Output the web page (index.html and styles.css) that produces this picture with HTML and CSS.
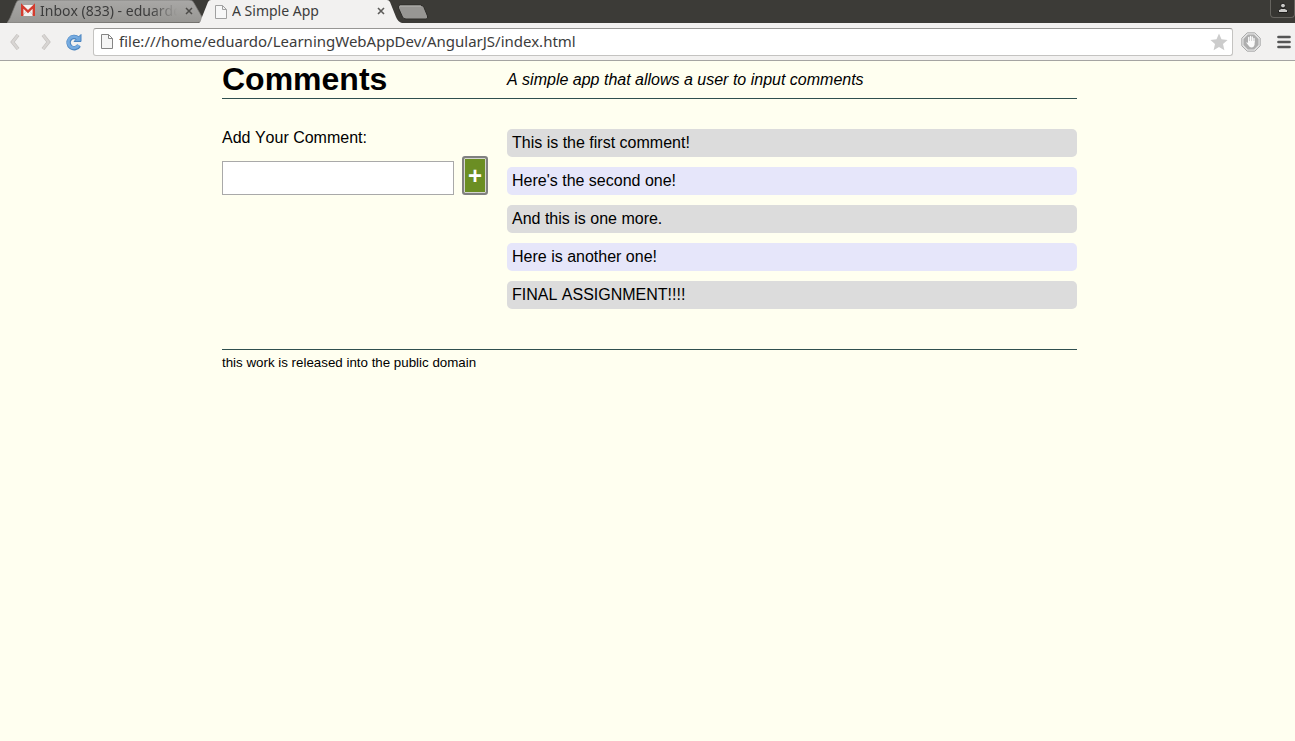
FILE: index.html
```html
<!DOCTYPE html>
<html lang="en">
<head>
<meta charset="utf-8">
<title>A Simple App</title>
<link rel="stylesheet" href="styles.css">
</head>
<body>
<div class="browser">
  <div class="tab-strip">
    <div class="tab tab-mail">
      <svg class="tab-shape" viewBox="0 0 196 23" preserveAspectRatio="none" aria-hidden="true">
        <defs><linearGradient id="idle" x1="0" y1="0" x2="0" y2="1"><stop offset="0" stop-color="#a9a8a6"/><stop offset="1" stop-color="#979693"/></linearGradient></defs>
        <path d="M0 23L3 18L9 3Q10 0 13 0H182Q186 0 187 3L195 17Q198 22 191 22.500Z" fill="url(#idle)" stroke="#777672" stroke-width=".7"/>
      </svg>
      <svg class="mail-icon" width="16" height="16" viewBox="0 0 16 16" aria-hidden="true">
        <path d="M1 2H15V13H1Z" fill="#f4f2f0"/>
        <path d="M3 12 6.500 8M13 12 9.500 8" stroke="#ccc" fill="none"/>
        <path d="M2.200 13V3L8 8.500 13.800 3V13" fill="none" stroke="#d43c2f" stroke-width="2.400"/>
      </svg>
      <span class="tab-title fading">Inbox (833) - eduardo</span>
      <button class="close" aria-label="Close inbox tab"><svg width="8" height="8" viewBox="0 0 8 8"><path d="M1 1 7 7M7 1 1 7" stroke="#4c4b48" stroke-width="1.500"/></svg></button>
    </div>
    <div class="tab tab-app">
      <svg class="tab-shape" viewBox="0 0 203 23" preserveAspectRatio="none" aria-hidden="true">
        <path d="M0 23C2 22 2 20 3 17L9 2Q10 0 12 0H188Q190 0 191 2L197 17Q199 22 203 23Z" fill="#f2f1f0"/>
      </svg>
      <svg class="page-icon" width="12" height="15" viewBox="0 0 12 15" aria-hidden="true"><path d="M.5 1.500H7.500L11.500 5.500V14.500H.5ZM7.500 1.500V5.500H11.500" fill="#f7f7f7" stroke="#a0a0a0"/></svg>
      <span class="tab-title">A Simple App</span>
      <button class="close" aria-label="Close app tab"><svg width="8" height="8" viewBox="0 0 8 8"><path d="M1 1 7 7M7 1 1 7" stroke="#5d5c5a" stroke-width="1.600"/></svg></button>
    </div>
    <button class="new-tab" aria-label="New tab"><svg width="32" height="16" viewBox="0 0 32 16"><path d="M3 1H23Q26 1 27 3.500L30.500 12Q31.500 15 29 15H9Q6.500 15 5.500 13L1.500 4Q.5 1 3 1Z" fill="#979693" stroke="#2d2c29"/><path d="M3 2H24" stroke="#b5b4b1"/></svg></button>
    <button class="profile" aria-label="Profile"><svg width="12" height="12" viewBox="0 0 12 12"><circle cx="6" cy="3.600" r="2.400" fill="#c9c8c6" stroke="#1d1c1a"/><path d="M1.500 10.500V8.500Q2 7 4.500 6.500H7.500Q10 7 10.500 8.500V10.500Z" fill="#c9c8c6" stroke="#1d1c1a"/></svg></button>
  </div>
  <div class="toolbar">
    <button class="nav back" aria-label="Back"><svg width="12" height="18" viewBox="0 0 12 18"><path d="M9 2 3.500 9 9 16" fill="none" stroke="#c3c0bd" stroke-width="3.600"/><path d="M9 2 3.500 9 9 16" fill="none" stroke="#d8d5d3" stroke-width="2.200"/></svg></button>
    <button class="nav forward" aria-label="Forward"><svg width="12" height="18" viewBox="0 0 12 18"><path d="M3 2 8.500 9 3 16" fill="none" stroke="#c3c0bd" stroke-width="3.600"/><path d="M3 2 8.500 9 3 16" fill="none" stroke="#d8d5d3" stroke-width="2.200"/></svg></button>
    <button class="nav reload" aria-label="Reload"><svg width="18" height="18" viewBox="0 0 18 18"><path d="M13 5.500A5.600 5.600 0 1 0 14 12.500" fill="none" stroke="#4a84bf" stroke-width="4.400"/><path d="M16 1.500V8.500H9Z" fill="#6fa6dc" stroke="#4a84bf"/><path d="M13 5.500A5.600 5.600 0 1 0 13.800 12" fill="none" stroke="#76abe0" stroke-width="2.800"/></svg></button>
    <div class="address">
      <svg class="page-icon" width="12" height="15" viewBox="0 0 12 15" aria-hidden="true"><path d="M.5.5H7.500L11.500 4.500V14.500H.5ZM7.500.5V4.500H11.500" fill="#f5f5f5" stroke="#858585"/></svg>
      <input class="url" type="text" aria-label="Address" value="file:///home/eduardo/LearningWebAppDev/AngularJS/index.html">
      <button class="star" aria-label="Bookmark"><svg width="18" height="18" viewBox="0 0 18 18"><path d="M9 .5 11.500 6.300 17.600 6.900 13 11 14.400 17.200 9 13.900 3.600 17.200 5 11 .4 6.900 6.500 6.300Z" fill="#ccc"/></svg></button>
    </div>
    <button class="nav blocker" aria-label="Ad blocker"><svg width="20" height="20" viewBox="0 0 20 20"><path d="M6.200 .8H13.800L19.200 6.200V13.800L13.800 19.200H6.200L.8 13.800V6.200Z" fill="#e4e4e4" stroke="#aaa"/><path d="M6.900 2.500H13.100L17.500 6.900V13.100L13.100 17.500H6.900L2.500 13.100V6.900Z" fill="#aeaeae"/><path d="M7.700 10V5.500M9.500 9V4.500M11.300 9V5M13 10V6.500" stroke="#fafafa" stroke-width="1.300" stroke-linecap="round"/><path d="M7.100 9H13.600V12.500Q13 15.500 10.500 15.500Q8.500 15.500 7.500 13.500L5.300 10.800Q5.500 9.500 7.100 11Z" fill="#fafafa"/></svg></button>
    <button class="nav menu" aria-label="Menu"><svg width="14" height="14" viewBox="0 0 14 14"><path d="M1.500 2H12.500M1.500 7H12.500M1.500 12H12.500" stroke="#555" stroke-width="2.700" stroke-linecap="round"/></svg></button>
  </div>
</div>
<div class="viewport">
  <div class="page">
    <header class="row masthead">
      <h1>Comments</h1>
      <p class="tagline">A simple app that allows a user to input comments</p>
    </header>
    <main class="row content">
      <section class="comment-input">
        <label for="comment">Add Your Comment:</label>
        <div class="entry">
          <input class="comment-box" id="comment" type="text">
          <button class="add">+</button>
        </div>
      </section>
      <section class="comments">
        <p>This is the first comment!</p>
        <p>Here's the second one!</p>
        <p>And this is one more.</p>
        <p>Here is another one!</p>
        <p>FINAL ASSIGNMENT!!!!</p>
      </section>
    </main>
    <footer>this work is released into the public domain</footer>
  </div>
</div>
</body>
</html>
```
FILE: styles.css
```css
* { box-sizing: border-box; margin: 0; padding: 0; }
body { background: ivory; color: #000; font: 16px/18px "Liberation Sans", Arial, sans-serif; font-kerning: none; }
button { border: 0; background: none; font: inherit; display: flex; align-items: center; justify-content: center; }
svg { display: block; flex: none; }

.browser { font-family: "Noto Sans", sans-serif; color: #3c3c3c; }
.tab-strip { display: flex; height: 23px; padding-left: 7px; background: #3c3b37; }
.tab { position: relative; display: flex; align-items: center; height: 23px; padding-bottom: 1px; }
.tab > * { position: relative; }
.tab .tab-shape { position: absolute; inset: 0; width: 100%; height: 100%; }
.tab-mail { width: 196px; padding-left: 13px; padding-right: 10px; }
.tab-app { width: 203px; margin-left: -4px; padding-left: 16px; padding-right: 17px; z-index: 1; }
.mail-icon { margin-right: 4px; }
.tab-app .page-icon { margin-right: 5px; }
.tab-title { flex: 1; min-width: 0; overflow: hidden; white-space: nowrap; font-size: 14px; line-height: 20px; }
.fading { -webkit-mask-image: linear-gradient(to right, #000 80%, transparent); mask-image: linear-gradient(to right, #000 80%, transparent); }
.close { width: 8px; height: 20px; margin-left: 8px; }
.new-tab { width: 32px; margin-left: -5px; }
.profile { width: 25px; height: 18px; margin-left: auto; padding-bottom: 2px; border: 1px solid #66645f; border-top: 0; border-radius: 0 0 4px 4px; background: #373632; }

.toolbar { display: flex; align-items: center; height: 38px; padding: 0 4px 0 9px; background: #f2f1f0; border-bottom: 1px solid #a5a4a2; }
.forward { margin-left: 19px; }
.reload { margin: 0 10px 0 13px; }
.address { flex: 1; display: flex; align-items: center; height: 28px; padding: 0 4px 0 7px; background: #fff; border: 1px solid #c4c3c1; border-top-color: #979694; border-radius: 3px; }
.url { flex: 1; min-width: 0; height: 24px; margin-left: 6px; padding-bottom: 1px; border: 0; outline: 0; background: none; color: #3c3c3c; font: 15px "Noto Sans", sans-serif; }
.blocker { margin-left: 8px; }
.menu { margin-left: 16px; }

.viewport { padding-left: 4px; }
.page { max-width: 855px; margin: 0 auto; }
.row { display: grid; grid-template-columns: 1fr 2fr; }
.masthead { align-items: center; height: 38px; border-bottom: 1px solid darkslategray; }
h1 { margin-bottom: 2px; font-size: 32px; line-height: 34px; }
.tagline { font-style: italic; }
.content { padding: 30px 0 40px; }
.comment-input { padding-right: 19px; }
.comment-input label { display: block; }
.entry { display: flex; align-items: flex-end; gap: 8px; margin-top: 9px; }
.comment-box { flex: 1; min-width: 0; height: 34px; padding: 0 8px; border: 1px solid #a9a9a9; background: #fff; font: inherit; }
.add { width: 26px; height: 39px; border: 2px solid #808080; border-radius: 3px; outline: 1px solid #d4d4d0; outline-offset: -3px; background: olivedrab; color: #fff; font-size: 24px; font-weight: bold; }
.comments { display: grid; gap: 10px; }
.comments p { min-height: 28px; padding: 5px; border-radius: 5px; background: gainsboro; }
.comments p:nth-child(even) { background: lavender; }
footer { padding-top: 4px; border-top: 1px solid darkslategray; font-size: smaller; }
```
